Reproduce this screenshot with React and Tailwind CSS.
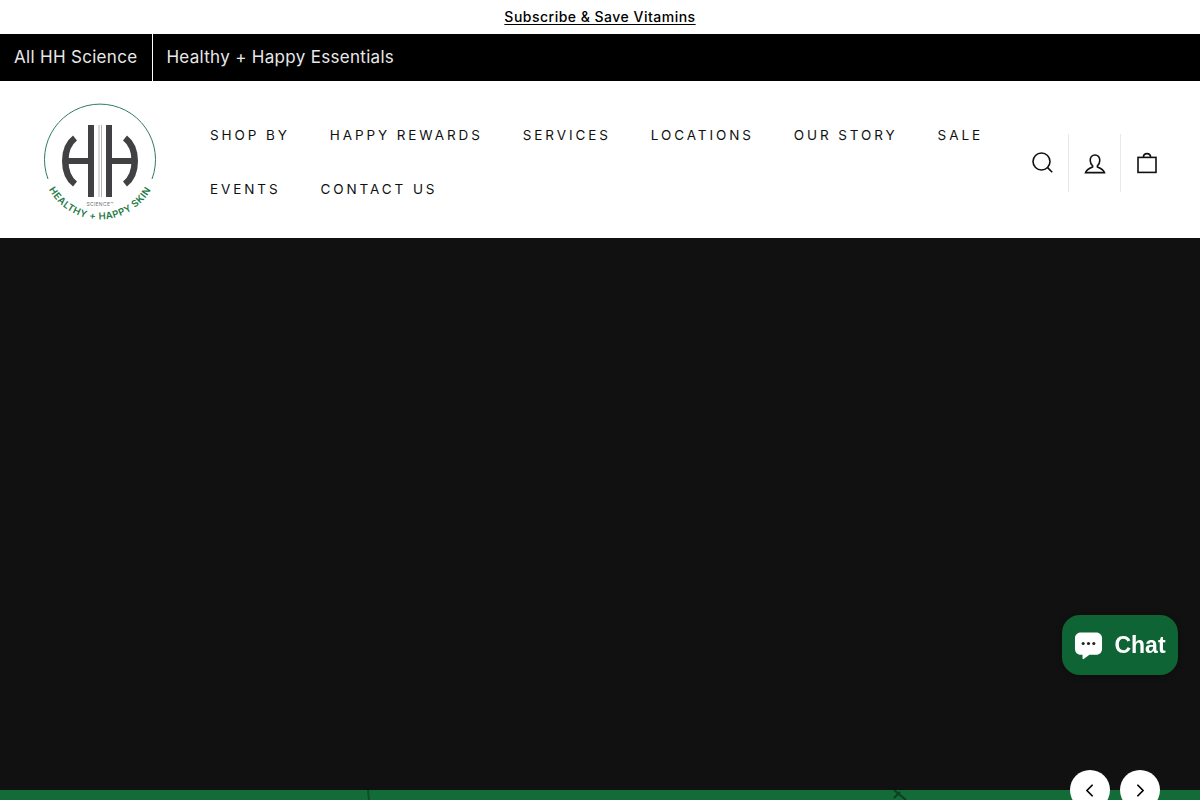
import { ChevronLeft, ChevronRight } from 'lucide-react';

const navItems = [
  'Shop by',
  'Happy Rewards',
  'Services',
  'Locations',
  'Our Story',
  'Sale',
  'Events',
  'Contact Us',
];

function Logo() {
  return (
    <svg width="120" height="124" viewBox="40 100 120 124" className="block">
      <defs>
        <path id="logo-text-arc" d="M 42.4 171.2 A 58.5 58.5 0 0 0 157.6 171.2" />
      </defs>
      <path d="M 48 179 A 55.5 55.5 0 1 1 152 179" fill="none" stroke="#2f7d5c" strokeWidth="1" />
      <rect x="88" y="125" width="6" height="72" fill="#414042" />
      <rect x="106" y="125" width="6" height="72" fill="#414042" />
      <rect x="98.5" y="125" width="1" height="72" fill="#b5b5b5" />
      <rect x="101" y="125" width="1" height="72" fill="#b5b5b5" />
      <rect x="68" y="158" width="20" height="6" fill="#414042" />
      <rect x="112" y="158" width="21" height="6" fill="#414042" />
      <path d="M 75 138 C 62 148 62 174 75 184" fill="none" stroke="#414042" strokeWidth="6.5" />
      <path d="M 125 138 C 138 148 138 174 125 184" fill="none" stroke="#414042" strokeWidth="6.5" />
      <text x="100" y="206" textAnchor="middle" fontSize="5" letterSpacing="0.3" fill="#6d6e71" fontFamily="Inter, sans-serif">
        SCIENCE™
      </text>
      <text fontSize="9.5" fontWeight="600" letterSpacing="0.5" fill="#1c7a45" fontFamily="Inter, sans-serif">
        <textPath href="#logo-text-arc" startOffset="50%" textAnchor="middle">
          HEALTHY + HAPPY SKIN
        </textPath>
      </text>
    </svg>
  );
}

function SearchIcon() {
  return (
    <svg width="24" height="24" viewBox="0 0 24 24" fill="none" stroke="#111" strokeWidth="1.6">
      <circle cx="10.5" cy="10.5" r="8.5" />
      <path d="M16.6 16.6 L21.2 21.2" />
    </svg>
  );
}

function AccountIcon() {
  return (
    <svg width="24" height="24" viewBox="0 0 24 24" fill="none" stroke="#111" strokeWidth="1.6">
      <path d="M12 4 C9 4 7.2 6.4 7.2 9.3 C7.2 11.6 8.2 13.6 9.6 14.8 L9.6 16 C7 17 3.4 18.4 2.5 21.6 L21.5 21.6 C20.6 18.4 17 17 14.4 16 L14.4 14.8 C15.8 13.6 16.8 11.6 16.8 9.3 C16.8 6.4 15 4 12 4 Z" />
    </svg>
  );
}

function BagIcon() {
  return (
    <svg width="24" height="24" viewBox="0 0 24 24" fill="none" stroke="#111" strokeWidth="1.6">
      <rect x="3" y="6.4" width="18" height="15" />
      <path d="M8.4 6.4 C8.4 3.4 9.6 2.6 12 2.6 C14.4 2.6 15.6 3.4 15.6 6.4" />
    </svg>
  );
}

export default function App() {
  return (
    <div className="h-screen overflow-hidden flex flex-col bg-white font-['Inter',sans-serif]">
      <div className="h-[34px] shrink-0 flex items-center justify-center pb-[2px]">
        <a href="#" className="text-[14px] font-medium tracking-[0.035em] text-black underline underline-offset-2">
          Subscribe &amp; Save Vitamins
        </a>
      </div>

      <div className="h-[47px] shrink-0 bg-black flex text-[17px] tracking-[0.018em] text-[#e8e8e8]">
        <a href="#" className="flex items-center pl-[14px] pr-[15px] border-r border-white">All HH Science</a>
        <a href="#" className="flex items-center pl-[13px] pr-[14px]">Healthy + Happy Essentials</a>
      </div>

      <header className="h-[157px] shrink-0 flex items-center pl-[40px] pr-[27px]">
        <div className="w-[150px] shrink-0 mt-[5px]">
          <Logo />
        </div>
        <nav className="flex-1 flex flex-wrap mt-[5px]">
          {navItems.map((item) => (
            <a
              key={item}
              href="#"
              className="h-[54px] flex items-center px-[20px] text-[13.5px] uppercase tracking-[0.215em] text-[#111]"
            >
              {item}
            </a>
          ))}
        </nav>
        <div className="flex shrink-0 mt-[7px]">
          <div className="w-[52px] h-[58px] flex items-center justify-center border-r border-[#e8e8e8]">
            <SearchIcon />
          </div>
          <div className="w-[52px] h-[58px] flex items-center justify-center border-r border-[#e8e8e8]">
            <AccountIcon />
          </div>
          <div className="w-[52px] h-[58px] flex items-center justify-center">
            <BagIcon />
          </div>
        </div>
      </header>

      <section className="relative flex-1 bg-[#111111]">
        <div className="absolute left-0 right-0 top-[552px] h-[10px] bg-[#136b37] overflow-hidden">
          <svg width="1200" height="10" className="block">
            <path d="M368 0 L369 10" stroke="#0d4f29" strokeWidth="2" fill="none" />
            <path d="M894 0 L906 10 M900 2 L894 8" stroke="#0d3f22" strokeWidth="2" fill="none" />
          </svg>
        </div>
        <button className="absolute left-[1070px] top-[532px] w-10 h-10 rounded-full bg-white flex items-center justify-center text-black">
          <ChevronLeft size={21} strokeWidth={2} className="-ml-[2px]" />
        </button>
        <button className="absolute left-[1120px] top-[532px] w-10 h-10 rounded-full bg-white flex items-center justify-center text-black">
          <ChevronRight size={21} strokeWidth={2} className="ml-[1px]" />
        </button>
      </section>

      <button className="fixed left-[1062px] top-[615px] w-[116px] h-[60px] rounded-[18px] bg-[#0f6435] shadow-[0_1px_6px_rgba(0,0,0,0.3)] flex items-center justify-center gap-[11px] text-white font-['Liberation_Sans',sans-serif] font-bold text-[23px]">
        <svg width="29" height="29" viewBox="0 0 30 30">
          <path d="M7 1.5 H23 C26.5 1.5 29 4 29 7.5 V18.5 C29 22 26.5 24.5 23 24.5 H16 L10 29 C9.4 29.4 8.8 29 8.8 28.4 V24.5 H7 C3.5 24.5 1 22 1 18.5 V7.5 C1 4 3.5 1.5 7 1.5 Z" fill="#fff" />
          <circle cx="9.5" cy="13" r="1.6" fill="#222" />
          <circle cx="15" cy="13" r="1.6" fill="#222" />
          <circle cx="20.5" cy="13" r="1.6" fill="#222" />
        </svg>
        <span>Chat</span>
      </button>
    </div>
  );
}
